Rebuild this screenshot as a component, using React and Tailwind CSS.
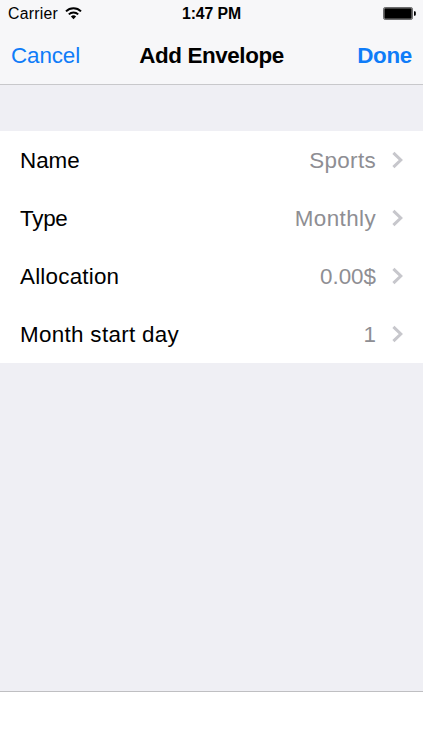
import React, { useState } from 'react';

const StatusBar = () => (
  <div className="relative flex h-[27px] items-center justify-between pl-2 pr-[7px] text-[15.8px] leading-none text-black">
    <div className="flex items-center">
      <span className="pt-px tracking-[0.25px]">Carrier</span>
      <svg className="ml-[7px] h-[13px] w-[17px]" viewBox="0 0 17 13" fill="none" stroke="currentColor">
        <path d="M1 4.4a10.6 10.6 0 0 1 15 0" strokeWidth="2" />
        <path d="M3.8 7.4a6.6 6.6 0 0 1 9.4 0" strokeWidth="1.9" />
        <path d="M8.5 12.2 5.9 9.6a3.7 3.7 0 0 1 5.2 0z" fill="currentColor" stroke="none" />
      </svg>
    </div>
    <span className="absolute inset-x-0 pt-px text-center font-semibold tracking-[-0.1px]">1:47 PM</span>
    <svg className="h-[13px] w-[33px]" viewBox="0 0 33 13">
      <rect x="0.5" y="0.5" width="29" height="12" rx="1.6" fill="#fff" stroke="#6c6c6e" />
      <rect x="1.3" y="1.3" width="27.4" height="10.4" rx="0.6" fill="#000" />
      <path d="M31 4.3h.6a1.2 1.2 0 0 1 1.2 1.2v2a1.2 1.2 0 0 1-1.2 1.2H31z" fill="#000" />
    </svg>
  </div>
);

const Row = ({ label, labelClass = '', value, valueClass = '', onClick }) => (
  <button
    type="button"
    onClick={onClick}
    className="flex h-[58px] w-full items-center pl-5 pr-5 pt-px text-left text-[22.4px]"
  >
    <span className="flex-1 text-black">
      <span className={labelClass}>{label}</span>
    </span>
    <span className={`text-[#8e8e93] ${valueClass}`}>{value}</span>
    <svg className="mb-px ml-4 h-[18px] w-[11px]" viewBox="0 0 11 18" fill="none">
      <path d="M1.4 1.8 8.8 9l-7.4 7.2" stroke="#c7c7cc" strokeWidth="3" />
    </svg>
  </button>
);

const App = () => {
  const [envelope] = useState({
    name: 'Sports',
    type: 'Monthly',
    allocation: '0.00$',
    startDay: '1',
  });

  return (
    <div className="flex h-[750px] w-[423px] flex-col overflow-hidden bg-[#efeff4] font-['Liberation_Sans',Arial,sans-serif]">
      {/* Navigation bar */}
      <header className="h-[85px] border-b border-[#c8c8cb] bg-[#f7f7f9]">
        <StatusBar />
        <div className="grid h-[58px] grid-cols-[1fr_auto_1fr] items-center px-[11px] text-[22.4px] text-[#0f7cf8]">
          <button type="button" className="text-left tracking-[-0.1px]">Cancel</button>
          <h1 className="font-bold tracking-[-0.4px] text-black">Add Envelope</h1>
          <button type="button" className="text-right font-bold tracking-[-0.3px]">Done</button>
        </div>
      </header>

      {/* Envelope fields */}
      <main className="flex-1 pt-[46px]">
        <div className="bg-white">
          <Row label="Name" value={envelope.name} valueClass="tracking-[0.35px]" />
          <Row label="Type" labelClass="tracking-[-0.25px]" value={envelope.type} valueClass="tracking-[0.4px]" />
          <Row label="Allocation" labelClass="tracking-[0.22px]" value={envelope.allocation} />
          <Row label="Month start day" labelClass="tracking-[0.32px]" value={envelope.startDay} />
        </div>
      </main>

      {/* Bottom bar */}
      <footer className="h-[59px] border-t border-[#bfbfc2] bg-white" />
    </div>
  );
};

export default App;
